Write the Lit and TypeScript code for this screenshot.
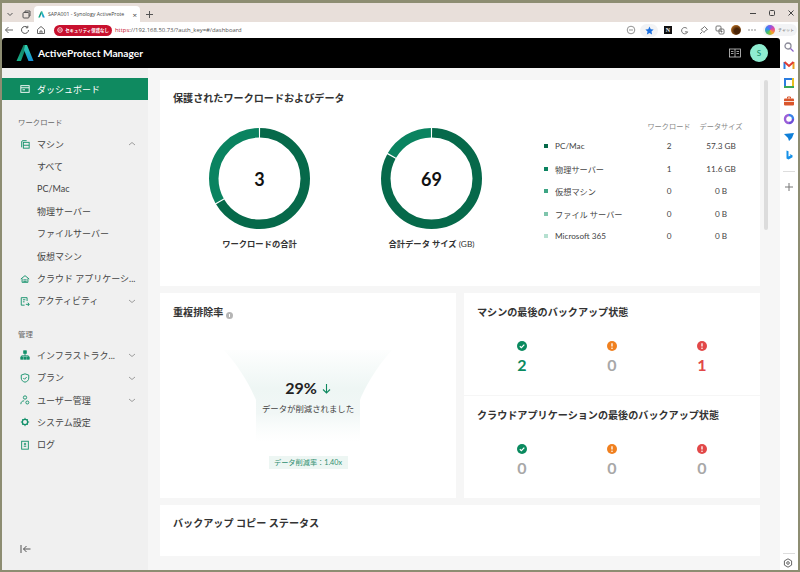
import {html, svg, css, LitElement} from 'lit';
import {customElement} from 'lit/decorators.js';

const logo = (size: number) => html`
  <svg width=${size} height=${size} viewBox="0 0 18 18">
    <defs>
      <linearGradient id="lg" x1="0" y1="1" x2="1" y2="0">
        <stop offset="0" stop-color="#18b48c" />
        <stop offset="1" stop-color="#0f6e58" />
      </linearGradient>
      <linearGradient id="lb" x1="0" y1="0" x2="0" y2="1">
        <stop offset="0" stop-color="#2fd0a8" />
        <stop offset="1" stop-color="#1590d8" />
      </linearGradient>
    </defs>
    <polygon points="7.5,1 11,1 5,17 0.5,17" fill="url(#lg)" />
    <polygon points="9,1 11,1 17.5,17 12.5,17 8,6" fill="url(#lb)" />
  </svg>
`;

// sidebar icons, all on a 12x12 box with a currentColor stroke
const navIcons: Record<string, unknown> = {
  dash: svg`<rect x="1" y="2" width="10" height="8" /><path d="M1 4.5h10M3 7h3" />`,
  machine: svg`<path d="M2 10V3.5a1.5 1.5 0 0 1 1.5-1.5H8" /><rect x="4" y="4" width="7" height="7" /><path d="M4 7.5h7" />`,
  cloud: svg`<path d="M1 6 6 2l5 4M2.5 5.5V10h7V5.5" /><path d="M4 7h4M4 8.8h4" />`,
  activity: svg`<path d="M8.5 6V2h-7v9h4" /><path d="M3.5 4.5h3M3.5 7h2M7 10h4M9.5 8l1.5 2-1.5 2" />`,
  infra: svg`<rect x="4.5" y="1" width="3" height="3" fill="currentColor" /><path d="M6 4v3M2 9V7h8v2" /><rect x="1" y="8.5" width="2.5" height="2.5" fill="currentColor" /><rect x="4.8" y="8.5" width="2.5" height="2.5" fill="currentColor" /><rect x="8.5" y="8.5" width="2.5" height="2.5" fill="currentColor" />`,
  plan: svg`<path d="M6 1l4.5 1.5V6c0 2.8-2 4.4-4.5 5-2.500-.6-4.500-2.200-4.500-5V2.500z" /><path d="M4 6l1.500 1.500L8 4.800" />`,
  user: svg`<circle cx="6" cy="3" r="2" /><path d="M1 11c0-2.500 1.500-4 4-4" /><circle cx="8.800" cy="9" r="1.800" />`,
  gear: svg`<circle cx="6" cy="6" r="3.200" stroke-width="1.600" /><path d="M6 1v1.500M6 9.500V11M1 6h1.500M9.500 6H11M2.500 2.500l1 1M8.500 8.500l1 1M9.500 2.500l-1 1M3.500 8.500l-1 1" />`,
  log: svg`<rect x="2" y="1.500" width="8" height="9.500" /><path d="M4.500 7.500h3" /><circle cx="6" cy="4.800" r="1" />`,
};

type NavRow = {label: string; icon?: string; chevron?: 'up' | 'down'};

// the two long labels are cut by the app itself in the screenshot
const workloadNav: NavRow[] = [
  {label: 'マシン', icon: 'machine', chevron: 'up'},
  {label: 'すべて'},
  {label: 'PC/Mac'},
  {label: '物理サーバー'},
  {label: 'ファイルサーバー'},
  {label: '仮想マシン'},
  {label: 'クラウド アプリケーシ...', icon: 'cloud'},
  {label: 'アクティビティ', icon: 'activity', chevron: 'down'},
];

const adminNav: NavRow[] = [
  {label: 'インフラストラク...', icon: 'infra', chevron: 'down'},
  {label: 'プラン', icon: 'plan', chevron: 'down'},
  {label: 'ユーザー管理', icon: 'user', chevron: 'down'},
  {label: 'システム設定', icon: 'gear'},
  {label: 'ログ', icon: 'log'},
];

const legend = [
  {name: 'PC/Mac', count: '2', size: '57.3 GB', color: '#06694a'},
  {name: '物理サーバー', count: '1', size: '11.6 GB', color: '#0a8360'},
  {name: '仮想マシン', count: '0', size: '0 B', color: '#3da584'},
  {name: 'ファイル サーバー', count: '0', size: '0 B', color: '#7fc5ac'},
  {name: 'Microsoft 365', count: '0', size: '0 B', color: '#b5e0d0'},
];

const statusIcon = (kind: string) => {
  if (kind === 'ok') {
    return html`<svg class="st ok" viewBox="0 0 10 10"><circle cx="5" cy="5" r="5" fill="currentColor" /><path d="M2.800 5.200l1.600 1.500 2.900-3" fill="none" stroke="#fff" stroke-width="1.200" /></svg>`;
  }
  return html`<svg class="st ${kind}" viewBox="0 0 10 10"><circle cx="5" cy="5" r="5" fill="currentColor" /><path d="M5 2.200v3.200" stroke="#fff" stroke-width="1.300" /><circle cx="5" cy="7.300" r=".8" fill="#fff" /></svg>`;
};

@customElement('app-root')
export class AppRoot extends LitElement {
  static styles = css`
    :host {
      display: block;
      width: 800px;
      height: 572px;
      overflow: hidden;
      font-family: Lato, 'Noto Sans CJK JP', sans-serif;
      color: #333;
    }
    .frame {
      box-sizing: border-box;
      height: 572px;
      padding: 3px 2px 2px;
      background: #8d8d72;
    }
    .win {
      height: 100%;
      display: flex;
      flex-direction: column;
      background: #fff;
    }

    /* browser chrome */
    .tabs {
      height: 19px;
      flex: none;
      display: flex;
      align-items: flex-end;
      background: #e8dfda;
      color: #444;
    }
    .tabs .sq {
      width: 16px;
      height: 16px;
      display: flex;
      align-items: center;
      justify-content: center;
      flex: none;
    }
    .tab {
      width: 106px;
      height: 16px;
      padding: 0 3px 0 4px;
      box-sizing: border-box;
      display: flex;
      align-items: center;
      gap: 3px;
      background: #fff;
      border-radius: 4px 4px 0 0;
      font: 5.200px 'Open Sans', 'Noto Sans CJK JP', sans-serif;
      white-space: nowrap;
    }
    .tab span {
      flex: 1;
    }
    .tab i {
      font-style: normal;
      font-size: 8px;
    }
    .plus {
      margin-left: 1px;
    }
    .winbtns {
      margin-left: auto;
      height: 19px;
      display: flex;
      align-items: center;
      gap: 11px;
      padding-right: 3px;
    }
    .addr {
      height: 16px;
      flex: none;
      display: flex;
      align-items: center;
      background: #fff;
      color: #555;
    }
    .navbtns {
      display: flex;
      gap: 6px;
      padding-left: 2px;
    }
    .navbtns svg,
    .tools svg {
      display: block;
    }
    .insecure {
      margin-left: 8px;
      width: 58px;
      height: 11px;
      border-radius: 6px;
      background: #c8102e;
      color: #fff;
      font: 700 4.400px 'Noto Sans CJK JP', sans-serif;
      display: flex;
      align-items: center;
      justify-content: center;
      gap: 2px;
      flex: none;
      white-space: nowrap;
    }
    .url {
      margin-left: 3px;
      font: 5.900px 'Open Sans', sans-serif;
      color: #555;
    }
    .url b {
      font-weight: 400;
      color: #c8102e;
    }
    .tools {
      margin-left: auto;
      display: flex;
      align-items: center;
      gap: 6px;
      padding-right: 1px;
    }
    .tools .pull {
      margin-right: -2px;
    }
    .tools .g {
      margin: 0 4px 0 2px;
    }
    .starpill {
      width: 18px;
      height: 13px;
      display: flex;
      align-items: center;
      justify-content: center;
      border-radius: 7px;
      background: #f2f3f5;
    }
    .n {
      width: 8px;
      height: 8px;
      background: #111;
      color: #fff;
      font: 700 6px 'Liberation Serif', serif;
      text-align: center;
      line-height: 8px;
    }
    .face {
      width: 10px;
      height: 10px;
      border-radius: 50%;
      background: radial-gradient(circle at 60% 60%, #4a2408 30%, #b46d22 75%);
    }
    .chat {
      width: 34px;
      height: 12px;
      border-radius: 6px;
      background: #f2f3f5;
      display: flex;
      align-items: center;
      gap: 3px;
      padding-left: 2px;
      box-sizing: border-box;
      font: 4px 'Noto Sans CJK JP', sans-serif;
      color: #555;
      white-space: nowrap;
    }
    .chat u {
      width: 10px;
      height: 10px;
      border-radius: 50%;
      background: conic-gradient(#7b5cf0, #e84a9a, #f5a623, #4fc45c, #2f8ef0, #7b5cf0);
      flex: none;
    }

    .body {
      flex: 1;
      min-height: 0;
      display: flex;
    }
    .app {
      width: 778px;
      flex: none;
      display: flex;
      flex-direction: column;
    }
    .strip {
      flex: 1;
      display: flex;
      flex-direction: column;
      align-items: center;
      padding-top: 3px;
      gap: 6px;
      background: #fff;
    }
    .strip svg {
      display: block;
      flex: none;
    }
    .strip hr {
      width: 12px;
      margin: 4px 0;
      border: 0;
      border-top: 1px solid #ddd;
    }
    .strip .low {
      margin-top: auto;
      margin-bottom: 2px;
    }

    /* product header */
    .top {
      height: 30px;
      flex: none;
      display: flex;
      align-items: center;
      background: #000;
      border-radius: 3px 3px 0 0;
      color: #fff;
      padding: 0 12px 0 14px;
    }
    .brand {
      margin-left: 4px;
      font: 700 10.200px Lato, sans-serif;
    }
    .book {
      margin-left: auto;
      margin-right: 9px;
      color: #ccc;
    }
    .avatar {
      width: 18px;
      height: 18px;
      border-radius: 50%;
      background: #8eedd0;
      color: #0a8360;
      font-size: 8px;
      display: flex;
      align-items: center;
      justify-content: center;
    }
    .under {
      flex: 1;
      min-height: 0;
      display: flex;
    }

    /* sidebar */
    .side {
      width: 146px;
      flex: none;
      box-sizing: border-box;
      display: flex;
      flex-direction: column;
      padding-top: 10px;
      background: #f0f0f0;
    }
    .row {
      height: 22.400px;
      display: flex;
      align-items: center;
      padding: 0 12px 0 18px;
      gap: 7px;
      font-size: 9px;
      color: #444;
    }
    .row svg.nav {
      width: 10px;
      height: 10px;
      flex: none;
      fill: none;
      stroke: currentColor;
      stroke-width: 1.100;
      color: #12906a;
    }
    .row .txt {
      flex: 1;
      min-width: 0;
      white-space: nowrap;
    }
    .row.sub {
      padding-left: 35px;
    }
    .row.active {
      height: 22px;
      background: #0f8a60;
      color: #fff;
    }
    .row.active svg.nav {
      color: #fff;
    }
    .row .chev {
      flex: none;
      margin-left: 9px;
    }
    .group {
      height: 12px;
      line-height: 12px;
      padding-left: 16px;
      font-size: 7.400px;
      color: #666;
      margin: 17px 0 4px;
    }
    .group.second {
      margin: 17px 0 3px;
    }
    .collapse {
      margin-top: auto;
      padding: 0 0 16px 18px;
      color: #555;
    }
    .collapse svg {
      display: block;
    }

    /* dashboard */
    .content {
      flex: 1;
      min-width: 0;
      display: flex;
      gap: 4px;
      padding: 12px 12px 0;
      background: #f6f6f6;
    }
    .cols {
      width: 600px;
      flex: none;
      display: flex;
      flex-direction: column;
      gap: 7px;
    }
    .scroll {
      width: 4px;
      height: 150px;
      background: #dcdcdc;
      border-radius: 2px;
    }
    .card {
      background: #fff;
      padding: 10px 13px 0;
      box-sizing: border-box;
    }
    h2 {
      margin: 0;
      font-size: 10.100px;
      line-height: 17px;
      font-weight: 700;
      color: #333;
      white-space: nowrap;
    }
    .overview {
      height: 206px;
    }
    .ovbody {
      display: flex;
      margin-top: 10px;
    }
    .donuts {
      display: flex;
      gap: 71px;
      padding: 11px 0 0 36px;
    }
    .donut {
      width: 101px;
      display: flex;
      flex-direction: column;
      align-items: center;
    }
    .ring {
      width: 101px;
      height: 101px;
      position: relative;
    }
    .ring svg {
      display: block;
    }
    .ring span {
      position: absolute;
      inset: 0;
      display: flex;
      align-items: center;
      justify-content: center;
      font-size: 18px;
      font-weight: 700;
      color: #111;
    }
    .donut p {
      margin: 9px 0 0;
      font-size: 8.300px;
      line-height: 12px;
      font-weight: 700;
      color: #333;
      white-space: nowrap;
    }
    .donut p small {
      font-weight: 400;
      font-size: 8.300px;
    }
    .legend {
      margin-left: 62px;
      display: grid;
      grid-template-columns: 100px 50px 54px;
      grid-template-rows: 17.750px repeat(5, 22.500px);
      align-items: center;
      font-size: 8.200px;
      color: #444;
    }
    .legend .h {
      font-size: 7.200px;
      color: #888;
      text-align: center;
      white-space: nowrap;
    }
    .legend .name {
      display: flex;
      align-items: center;
      gap: 7px;
      white-space: nowrap;
    }
    .legend .name i {
      width: 4px;
      height: 4px;
      flex: none;
    }
    .legend .num {
      text-align: center;
    }
    .split {
      height: 205px;
      display: grid;
      grid-template-columns: 296px 296px;
      gap: 8px;
    }
    .dedup {
      padding-top: 11px;
      display: flex;
      flex-direction: column;
    }
    .info {
      display: inline-flex;
      align-items: center;
      justify-content: center;
      width: 7px;
      height: 7px;
      margin-left: 3px;
      border-radius: 50%;
      background: #b5b5b5;
      vertical-align: -0.500px;
    }
    .info::after {
      content: '';
      width: 1px;
      height: 3px;
      background: #fff;
    }
    .funnel {
      position: relative;
      height: 97px;
      margin-top: 29px;
      padding-top: 28px;
      box-sizing: border-box;
      display: flex;
      flex-direction: column;
      align-items: center;
    }
    .funnel svg.bg {
      position: absolute;
      top: 0;
      left: 50%;
      margin-left: -84px;
    }
    .pct {
      position: relative;
      height: 20px;
      line-height: 20px;
      font-size: 16px;
      font-weight: 700;
      color: #222;
      display: flex;
      align-items: center;
      gap: 5px;
    }
    .desc {
      position: relative;
      margin-top: 4px;
      font-size: 8.400px;
      line-height: 14px;
      color: #444;
    }
    .ratio {
      align-self: center;
      width: 79px;
      height: 13px;
      margin-top: 9px;
      background: #edf6f3;
      color: #2f8f70;
      font-size: 7.200px;
      line-height: 13px;
      text-align: center;
      white-space: nowrap;
    }
    .stack {
      display: flex;
      flex-direction: column;
      gap: 1px;
    }
    .status {
      height: 102px;
      padding-top: 11px;
    }
    .trio {
      display: grid;
      grid-template-columns: repeat(3, 90px);
      margin-top: 19.500px;
      text-align: center;
    }
    .st {
      display: block;
      width: 10px;
      height: 10px;
      margin: 0 auto;
    }
    .ok {
      color: #0a8a5f;
    }
    .warn {
      color: #f0801f;
    }
    .err {
      color: #e24848;
    }
    .zero {
      color: #a8a8a8;
    }
    .digit {
      margin-top: 6px;
      font-size: 16px;
      line-height: 16px;
      font-weight: 700;
    }
    .copy {
      height: 51px;
    }
  `;

  navRow(r: NavRow) {
    const chev = r.chevron === 'up' ? 'M1 4l3-2.500L7 4' : 'M1 2l3 2.500L7 2';
    return html`
      <div class="row ${r.icon ? '' : 'sub'}">
        ${r.icon ? html`<svg class="nav" viewBox="0 0 12 12">${navIcons[r.icon]}</svg>` : ''}
        <span class="txt">${r.label}</span>
        ${r.chevron
          ? html`<svg class="chev" width="8" height="6" viewBox="0 0 8 6" fill="none" stroke="#888" stroke-width=".8"><path d=${chev} /></svg>`
          : ''}
      </div>
    `;
  }

  ring(label: string, value: string, dark: number, small = '') {
    const seg = (color: string, len: number, start: number) => svg`
      <circle cx="50.500" cy="50.500" r="45.750" fill="none" stroke=${color} stroke-width="9.500"
        pathLength="100" stroke-dasharray="${len - 0.4} ${100 - len + 0.4}" stroke-dashoffset=${-start}
        transform="rotate(-90 50.500 50.500)" />
    `;
    return html`
      <div class="donut">
        <div class="ring">
          <svg width="101" height="101" viewBox="0 0 101 101">
            ${seg('#06694a', dark, 0.2)} ${seg('#0a8360', 100 - dark, dark + 0.2)}
          </svg>
          <span>${value}</span>
        </div>
        <p>${label} ${small ? html`<small>${small}</small>` : ''}</p>
      </div>
    `;
  }

  statusCard(title: string, counts: [number, number, number]) {
    const kinds = ['ok', 'warn', 'err'];
    return html`
      <div class="card status">
        <h2>${title}</h2>
        <div class="trio">
          ${counts.map(
            (c, i) => html`
              <div>
                ${statusIcon(kinds[i])}
                <div class="digit ${c ? kinds[i] : 'zero'}">${c}</div>
              </div>
            `,
          )}
        </div>
      </div>
    `;
  }

  renderChrome() {
    return html`
      <div class="tabs">
        <div class="sq">
          <svg width="8" height="8" viewBox="0 0 8 8" fill="none" stroke="#555"><path d="M1.500 3l2.500 2.500L6.500 3" /></svg>
        </div>
        <div class="sq">
          <svg width="9" height="9" viewBox="0 0 9 9" fill="none" stroke="#555"><rect x="1" y="2.500" width="6" height="5.500" rx="1" /><path d="M3 2.500V1h5v5H7" /></svg>
        </div>
        <div class="tab">
          ${logo(7)}
          <span>SAPA001 - Synology ActiveProte</span>
          <i>×</i>
        </div>
        <div class="sq plus">
          <svg width="9" height="9" viewBox="0 0 9 9" stroke="#555"><path d="M4.500 1v7M1 4.500h7" /></svg>
        </div>
        <div class="winbtns">
          <svg width="8" height="8" viewBox="0 0 8 8" stroke="#444"><path d="M1 4.500h6" /></svg>
          <svg width="8" height="8" viewBox="0 0 8 8" fill="none" stroke="#444"><rect x="1.500" y="1.500" width="5" height="5" rx="1" /></svg>
          <svg width="8" height="8" viewBox="0 0 8 8" stroke="#444"><path d="M1.500 1.500l5 5M6.500 1.500l-5 5" /></svg>
        </div>
      </div>
      <div class="addr">
        <div class="navbtns">
          <svg width="10" height="10" viewBox="0 0 10 10" fill="none" stroke="#666"><path d="M9 5H1.500M4.500 2L1.500 5l3 3" /></svg>
          <svg width="10" height="10" viewBox="0 0 10 10" fill="none" stroke="#555"><path d="M8.500 5A3.500 3.500 0 1 1 7.300 2.300M7.800 .8v2H5.800" /></svg>
          <svg width="10" height="10" viewBox="0 0 10 10" fill="none" stroke="#666"><path d="M1.500 4.500L5 1.500l3.500 3V8.500h-7zM4 8.500V6h2v2.500" /></svg>
        </div>
        <div class="insecure">
          <svg width="6" height="6" viewBox="0 0 6 6" fill="none" stroke="#fff" stroke-width=".8"><circle cx="3" cy="3" r="2.300" /><path d="M1.500 3h3" /></svg>
          セキュリティ保護なし
        </div>
        <div class="url"><b>https</b>://192.168.50.73/?auth_key=#/dashboard</div>
        <div class="tools">
          <svg class="pull" width="10" height="10" viewBox="0 0 10 10" fill="none" stroke="#777" stroke-width=".8"><circle cx="5" cy="5" r="3.800" /><path d="M3 5h4" /></svg>
          <div class="starpill">
            <svg width="9" height="9" viewBox="0 0 10 10" fill="#1a6fe0"><path d="M5 .5l1.400 3 3.200.4-2.400 2.200.7 3.300L5 7.800 2.100 9.400l.7-3.300L.4 3.900l3.200-.4z" /></svg>
          </div>
          <div class="n">N</div>
          <svg class="g" width="9" height="9" viewBox="0 0 10 10" fill="none" stroke="#666"><path d="M8 3A3.500 3.500 0 1 0 8.500 6.500H5.500" /></svg>
          <svg width="10" height="10" viewBox="0 0 10 10" fill="none" stroke="#666" stroke-width=".9"><path d="M5.500 1.500l3 3-2 1-1.500 2-3-3 2-1.500zM3 7L1 9" /></svg>
          <svg width="10" height="10" viewBox="0 0 10 10" fill="none" stroke="#666" stroke-width=".9"><rect x="1" y="1" width="5" height="5" rx="1" /><rect x="4" y="4" width="5" height="5" rx="1" /><path d="M6.500 5.500v2M5.500 6.500h2" /></svg>
          <div class="face"></div>
          <svg width="10" height="6" viewBox="0 0 10 6" fill="#666"><circle cx="2" cy="3" r=".7" /><circle cx="5" cy="3" r=".7" /><circle cx="8" cy="3" r=".7" /></svg>
          <div class="chat"><u></u>チャット</div>
        </div>
      </div>
    `;
  }

  renderStrip() {
    return html`
      <div class="strip">
        <svg width="12" height="12" viewBox="0 0 12 12" fill="none" stroke="#8a8a98" stroke-width="1.300"><circle cx="5" cy="5" r="3" /><path d="M7.500 7.500l3 3" stroke="#8a63c8" /></svg>
        <svg width="12" height="12" viewBox="0 0 12 12" fill="none" stroke-width="2"><path d="M1.500 10V3" stroke="#2b7de0" /><path d="M10.500 10V3" stroke="#e8a020" /><path d="M1.500 3L6 7l4.500-4" stroke="#e03c32" /></svg>
        <svg width="12" height="12" viewBox="0 0 12 12"><rect x="1" y="1" width="10" height="10" fill="#2b7de0" /><rect x="3" y="3" width="6" height="6" fill="#fff" /><rect x="9" y="1" width="2" height="10" fill="#e8c020" /><rect x="1" y="9" width="10" height="2" fill="#3aa655" /></svg>
        <svg width="12" height="12" viewBox="0 0 12 12"><rect x="1" y="3.500" width="10" height="7" rx="1" fill="#d9552b" /><path d="M4.500 3.500V2h3v1.500" fill="none" stroke="#d9552b" /><rect x="1" y="6" width="10" height=".8" fill="#fff" /></svg>
        <svg width="12" height="12" viewBox="0 0 12 12" fill="none" stroke-width="2.400"><path d="M6 2a4 4 0 0 1 4 4" stroke="#3b82e8" /><path d="M10 6a4 4 0 0 1-4 4" stroke="#6d4fd8" /><path d="M6 10a4 4 0 0 1-4-4 4 4 0 0 1 4-4" stroke="#9a5fd8" /></svg>
        <svg width="12" height="12" viewBox="0 0 12 12"><path d="M1 3l10-1-2 5-3 3-1-3z" fill="#0f7fd8" /></svg>
        <svg width="12" height="12" viewBox="0 0 12 12"><path d="M3.500 1.500l2 .7v5.300l2-1-1-1.500 3 1.200v2L5.500 10.500l-2-1z" fill="#1590e8" /></svg>
        <hr />
        <svg width="10" height="10" viewBox="0 0 10 10" stroke="#777"><path d="M5 1v8M1 5h8" /></svg>
        <div class="low">
          <hr />
          <svg width="10" height="10" viewBox="0 0 10 10" fill="none" stroke="#666"><path d="M5 .8l3.600 2.100v4.200L5 9.200 1.400 7.100V2.900z" /><circle cx="5" cy="5" r="1.300" /></svg>
        </div>
      </div>
    `;
  }

  renderSide() {
    return html`
      <nav class="side">
        <div class="row active">
          <svg class="nav" viewBox="0 0 12 12">${navIcons.dash}</svg>
          <span class="txt">ダッシュボード</span>
        </div>
        <div class="group">ワークロード</div>
        ${workloadNav.map((r) => this.navRow(r))}
        <div class="group second">管理</div>
        ${adminNav.map((r) => this.navRow(r))}
        <div class="collapse">
          <svg width="11" height="10" viewBox="0 0 11 10" fill="none" stroke="#555"><path d="M1 1v8M10.500 5H3.500M6.500 2l-3 3 3 3" /></svg>
        </div>
      </nav>
    `;
  }

  render() {
    return html`
      <div class="frame">
        <div class="win">
          ${this.renderChrome()}
          <div class="body">
            <div class="app">
              <header class="top">
                ${logo(18)}
                <span class="brand">ActiveProtect Manager</span>
                <svg class="book" width="12" height="10" viewBox="0 0 12 10" fill="none" stroke="currentColor" stroke-width=".8"><rect x=".5" y="1" width="11" height="8" /><path d="M6 1v8M2 3.500h2.500M2 5.500h2.500M7.500 3.500H10M7.500 5.500H10" /></svg>
                <div class="avatar">S</div>
              </header>
              <div class="under">
                ${this.renderSide()}
                <main class="content">
                  <div class="cols">
                    <section class="card overview">
                      <h2>保護されたワークロードおよびデータ</h2>
                      <div class="ovbody">
                        <div class="donuts">
                          ${this.ring('ワークロードの合計', '3', 66.67)}
                          ${this.ring('合計データ サイズ', '69', 83.2, '(GB)')}
                        </div>
                        <div class="legend">
                          <span></span>
                          <span class="h">ワークロード</span>
                          <span class="h">データサイズ</span>
                          ${legend.map(
                            (l) => html`
                              <span class="name"><i style="background:${l.color}"></i>${l.name}</span>
                              <span class="num">${l.count}</span>
                              <span class="num">${l.size}</span>
                            `,
                          )}
                        </div>
                      </div>
                    </section>
                    <div class="split">
                      <section class="card dedup">
                        <h2>重複排除率<span class="info"></span></h2>
                        <div class="funnel">
                          <svg class="bg" width="168" height="97" viewBox="0 0 168 97">
                            <defs>
                              <linearGradient id="fade" x1="0" y1="0" x2="0" y2="1">
                                <stop offset="0" stop-color="#eef6f4" stop-opacity=".1" />
                                <stop offset=".4" stop-color="#eef6f4" />
                                <stop offset=".65" stop-color="#f1f7f6" />
                                <stop offset=".95" stop-color="#f7fbfa" stop-opacity="0" />
                              </linearGradient>
                            </defs>
                            <path d="M0 0H168C150 20 140 40 136 50V97H32V50C28 40 18 20 0 0Z" fill="url(#fade)" />
                          </svg>
                          <div class="pct">
                            29%
                            <svg width="9" height="11" viewBox="0 0 9 11" fill="none" stroke="#0f8a60" stroke-width="1.100"><path d="M4.500 1v9M1 6.500L4.500 10 8 6.500" /></svg>
                          </div>
                          <div class="desc">データが削減されました</div>
                        </div>
                        <div class="ratio">データ削減率：1.40x</div>
                      </section>
                      <div class="stack">
                        ${this.statusCard('マシンの最後のバックアップ状態', [2, 0, 1])}
                        ${this.statusCard('クラウドアプリケーションの最後のバックアップ状態', [0, 0, 0])}
                      </div>
                    </div>
                    <section class="card copy">
                      <h2>バックアップ コピー ステータス</h2>
                    </section>
                  </div>
                  <div class="scroll"></div>
                </main>
              </div>
            </div>
            ${this.renderStrip()}
          </div>
        </div>
      </div>
    `;
  }
}
